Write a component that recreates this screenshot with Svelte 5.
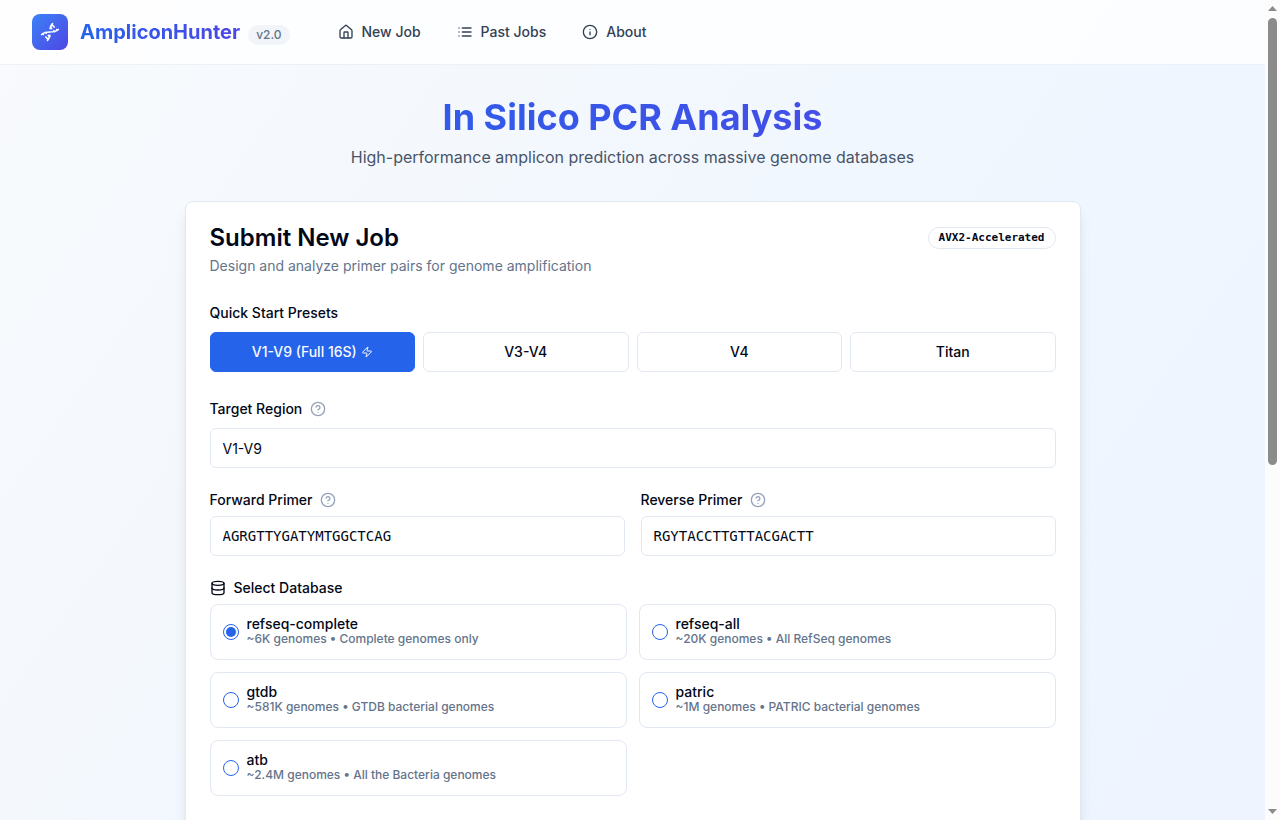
<script lang="ts">
  interface Database {
    id: string
    summary: string
  }

  const presets = [
    { id: 'V1-V9', label: 'V1-V9 (Full 16S)', fast: true, forward: 'AGRGTTYGATYMTGGCTCAG', reverse: 'RGYTACCTTGTTACGACTT' },
    { id: 'V3-V4', label: 'V3-V4', fast: false, forward: 'CCTACGGGNGGCWGCAG', reverse: 'GACTACHVGGGTATCTAATCC' },
    { id: 'V4', label: 'V4', fast: false, forward: 'GTGYCAGCMGCCGCGGTAA', reverse: 'GGACTACNVGGGTWTCTAAT' },
    { id: 'Titan', label: 'Titan', fast: false, forward: 'AGRRTTYGATYHTDGYTYAG', reverse: 'YCNTTCCYTYDYRGTACT' }
  ]

  const databases: Database[] = [
    { id: 'refseq-complete', summary: '~6K genomes • Complete genomes only' },
    { id: 'refseq-all', summary: '~20K genomes • All RefSeq genomes' },
    { id: 'gtdb', summary: '~581K genomes • GTDB bacterial genomes' },
    { id: 'patric', summary: '~1M genomes • PATRIC bacterial genomes' },
    { id: 'atb', summary: '~2.4M genomes • All the Bacteria genomes' }
  ]

  let preset = $state('V1-V9')
  let region = $state('V1-V9')
  let forward = $state('AGRGTTYGATYMTGGCTCAG')
  let reverse = $state('RGYTACCTTGTTACGACTT')
  let database = $state('refseq-complete')

  function applyPreset(p: (typeof presets)[number]) {
    preset = p.id
    region = p.id
    forward = p.forward
    reverse = p.reverse
  }
</script>

{#snippet help(label: string)}
  <button type="button" class="help" aria-label={label}>
    <svg class="icon" viewBox="0 0 24 24">
      <circle cx="12" cy="12" r="10" />
      <path d="M9.09 9a3 3 0 0 1 5.83 1c0 2-3 3-3 3" />
      <path d="M12 17h.01" />
    </svg>
  </button>
{/snippet}

<div class="shell">
  <div class="page">
    <header class="topbar">
      <a class="brand" href="#home">
        <span class="brand-mark">
          <svg class="icon icon--logo" viewBox="0 0 24 24">
            <path d="M2 15c6.667-6 13.333 0 20-6" />
            <path d="M9 22c1.798-1.998 2.518-3.995 2.807-5.993" />
            <path d="M15 2c-1.798 1.998-2.518 3.995-2.807 5.993" />
            <path d="m17 6-2.5-2.5M14 8l-1-1M7 18l2.5 2.5M3.5 14.5l.5.5M20 9l.5.5M6.5 12.5l1 1M16.500 10.500l1 1M10 16l1.500 1.500" />
          </svg>
        </span>
        <span class="brand-name">AmpliconHunter</span>
        <span class="version">v2.0</span>
      </a>
      <nav class="nav">
        <a href="#new">
          <svg class="icon" viewBox="0 0 24 24">
            <path d="M15 21v-8a1 1 0 0 0-1-1h-4a1 1 0 0 0-1 1v8" />
            <path d="M3 10a2 2 0 0 1 .709-1.528l7-5.999a2 2 0 0 1 2.582 0l7 5.999A2 2 0 0 1 21 10v9a2 2 0 0 1-2 2H5a2 2 0 0 1-2-2z" />
          </svg>
          New Job
        </a>
        <a href="#jobs">
          <svg class="icon" viewBox="0 0 24 24">
            <path d="M3 12h.01M3 18h.01M3 6h.01M8 12h13M8 18h13M8 6h13" />
          </svg>
          Past Jobs
        </a>
        <a href="#about">
          <svg class="icon" viewBox="0 0 24 24">
            <circle cx="12" cy="12" r="10" />
            <path d="M12 16v-4M12 8h.01" />
          </svg>
          About
        </a>
      </nav>
    </header>

    <main>
      <div class="hero">
        <h1>In Silico PCR Analysis</h1>
        <p>High-performance amplicon prediction across massive genome databases</p>
      </div>

      <form class="card">
        <div class="card-header">
          <div class="card-title">
            <h2>Submit New Job</h2>
            <span class="badge">AVX2-Accelerated</span>
          </div>
          <p>Design and analyze primer pairs for genome amplification</p>
        </div>

        <div class="field" role="group" aria-labelledby="presets-label">
          <span class="label label--tall" id="presets-label">Quick Start Presets</span>
          <div class="presets">
            {#each presets as p}
              <button
                type="button"
                class="preset"
                class:preset--active={p.id === preset}
                onclick={() => applyPreset(p)}
              >
                {p.label}
                {#if p.fast}
                  <svg class="icon icon--zap" viewBox="0 0 24 24">
                    <path d="M4 14a1 1 0 0 1-.78-1.63l9.900-10.200a.5.5 0 0 1 .86.46l-1.920 6.020A1 1 0 0 0 13 10h7a1 1 0 0 1 .78 1.630l-9.900 10.200a.5.5 0 0 1-.86-.46l1.920-6.020A1 1 0 0 0 11 14z" />
                  </svg>
                {/if}
              </button>
            {/each}
          </div>
        </div>

        <div class="field">
          <div class="label label--tall">
            <label for="region">Target Region</label>
            {@render help('About target region')}
          </div>
          <input id="region" class="input" type="text" bind:value={region} />
        </div>

        <div class="primers">
          <div class="field">
            <div class="label">
              <label for="forward">Forward Primer</label>
              {@render help('About forward primer')}
            </div>
            <input id="forward" class="input input--mono" type="text" spellcheck="false" bind:value={forward} />
          </div>
          <div class="field">
            <div class="label">
              <label for="reverse">Reverse Primer</label>
              {@render help('About reverse primer')}
            </div>
            <input id="reverse" class="input input--mono" type="text" spellcheck="false" bind:value={reverse} />
          </div>
        </div>

        <div class="field" role="radiogroup" aria-labelledby="database-label">
          <span class="label" id="database-label">
            <svg class="icon" viewBox="0 0 24 24">
              <ellipse cx="12" cy="5" rx="9" ry="3" />
              <path d="M3 5v14a9 3 0 0 0 18 0V5" />
              <path d="M3 12a9 3 0 0 0 18 0" />
            </svg>
            Select Database
          </span>
          <div class="databases">
            {#each databases as db}
              <label class="database">
                <input type="radio" name="database" value={db.id} bind:group={database} />
                <span class="database-text">
                  <span class="database-name">{db.id}</span>
                  <span class="database-summary">{db.summary}</span>
                </span>
              </label>
            {/each}
          </div>
        </div>
      </form>
    </main>
  </div>

  <div class="scrollbar" aria-hidden="true">
    <svg class="arrow" viewBox="0 0 9 5"><path d="M4.500 0 9 5H0z" /></svg>
    <div class="track"><div class="thumb"></div></div>
    <svg class="arrow" viewBox="0 0 9 5"><path d="M0 0h9L4.500 5z" /></svg>
  </div>
</div>

<style>
  .shell {
    --blue: #2563eb;
    --indigo: #4f46e5;
    --ink: #020817;
    --muted: #64748b;
    --border: #e2e8f0;
    --mono: 'DejaVu Sans Mono', monospace;

    display: flex;
    height: 100vh;
    overflow: hidden;
    color: var(--ink);
    font-family: Inter, sans-serif;
    font-size: 14px;
    line-height: 20px;
  }

  .shell *,
  .shell *::before {
    box-sizing: border-box;
  }

  h1,
  h2,
  p {
    margin: 0;
  }

  a {
    color: inherit;
    text-decoration: none;
  }

  .page {
    flex: 1;
    min-width: 0;
    background: linear-gradient(to bottom right, #f8fafc, #eff6ff, #eef2ff) 0 0 / 100% 220vh no-repeat;
  }

  .icon {
    width: 16px;
    height: 16px;
    flex: none;
    fill: none;
    stroke: currentColor;
    stroke-width: 2;
    stroke-linecap: round;
    stroke-linejoin: round;
  }

  /* Top bar */
  .topbar {
    display: flex;
    align-items: center;
    gap: 48px;
    height: 65px;
    padding: 0 32px;
    background: rgba(255, 255, 255, 0.8);
    border-bottom: 1px solid rgba(226, 232, 240, 0.6);
  }

  .brand {
    display: flex;
    align-items: center;
  }

  .brand-mark {
    display: flex;
    align-items: center;
    justify-content: center;
    width: 36px;
    height: 36px;
    margin-right: 12px;
    color: #fff;
    background: linear-gradient(to bottom right, #3b82f6, var(--indigo));
    border-radius: 8px;
  }

  .icon--logo {
    width: 20px;
    height: 20px;
  }

  .brand-name {
    font-size: 20px;
    font-weight: 700;
    line-height: 28px;
    color: transparent;
    background: linear-gradient(to right, var(--blue), var(--indigo));
    background-clip: text;
  }

  .version {
    margin: 6px 0 0 8px;
    padding: 2px 8px;
    color: var(--muted);
    font-size: 12px;
    font-weight: 500;
    line-height: 16px;
    background: #f1f5f9;
    border-radius: 10px;
  }

  .nav {
    display: flex;
    gap: 36px;
    color: #334155;
    font-weight: 500;
  }

  .nav a {
    display: flex;
    align-items: center;
    gap: 8px;
  }

  /* Hero */
  main {
    max-width: 896px;
    margin: 0 auto;
    padding-top: 32px;
  }

  .hero {
    margin-bottom: 32px;
    text-align: center;
  }

  .hero h1 {
    font-size: 36px;
    font-weight: 700;
    line-height: 40px;
    color: transparent;
    background: linear-gradient(to right, var(--blue), var(--indigo));
    background-clip: text;
  }

  .hero p {
    margin-top: 8px;
    color: #475569;
    font-size: 16px;
    line-height: 24px;
  }

  /* Form card */
  .card {
    display: flex;
    flex-direction: column;
    gap: 24px;
    padding: 24px 24px 48px;
    background: #fff;
    border: 1px solid var(--border);
    border-radius: 8px;
    box-shadow:
      0 10px 15px -3px rgba(0, 0, 0, 0.1),
      0 4px 6px -4px rgba(0, 0, 0, 0.1);
  }

  .card-header p {
    margin-top: 6px;
    color: var(--muted);
  }

  .card-title {
    display: flex;
    align-items: center;
    justify-content: space-between;
  }

  .card-title h2 {
    font-size: 24px;
    font-weight: 600;
    line-height: 24px;
  }

  .badge {
    padding: 0 10px;
    font-family: var(--mono);
    font-size: 11px;
    font-weight: 700;
    line-height: 20px;
    border: 1px solid var(--border);
    border-radius: 11px;
  }

  .field {
    display: flex;
    flex-direction: column;
    gap: 8px;
    min-width: 0;
  }

  .label {
    display: flex;
    align-items: center;
    gap: 8px;
    height: 16px;
    font-weight: 500;
  }

  .label--tall {
    height: 24px;
    padding-top: 2px;
  }

  .help {
    display: flex;
    padding: 0;
    color: #94a3b8;
    background: none;
    border: 0;
  }

  .presets {
    display: grid;
    grid-template-columns: repeat(4, 1fr);
    gap: 8px;
  }

  .preset {
    display: flex;
    align-items: center;
    justify-content: center;
    gap: 4px;
    height: 40px;
    color: var(--ink);
    font: inherit;
    font-weight: 500;
    background: #fff;
    border: 1px solid var(--border);
    border-radius: 6px;
    cursor: pointer;
  }

  .preset--active {
    color: #f8fafc;
    background: var(--blue);
    border-color: var(--blue);
  }

  .icon--zap {
    width: 12px;
    height: 12px;
  }

  .input {
    width: 100%;
    height: 40px;
    padding: 0 12px;
    color: var(--ink);
    font: inherit;
    background: #fff;
    border: 1px solid var(--border);
    border-radius: 6px;
  }

  .input--mono {
    font-family: var(--mono);
  }

  .primers {
    display: grid;
    grid-template-columns: repeat(2, 1fr);
    gap: 16px;
  }

  /* Databases */
  .databases {
    display: grid;
    grid-template-columns: repeat(2, 1fr);
    gap: 12px;
  }

  .database {
    display: flex;
    align-items: center;
    gap: 8px;
    padding: 12px;
    font-weight: 500;
    border: 1px solid var(--border);
    border-radius: 8px;
    cursor: pointer;
  }

  .database input {
    display: grid;
    place-items: center;
    width: 16px;
    height: 16px;
    margin: 0;
    appearance: none;
    border: 1px solid var(--blue);
    border-radius: 50%;
  }

  .database input:checked::before {
    content: '';
    width: 10px;
    height: 10px;
    background: var(--blue);
    border-radius: 50%;
  }

  .database-text {
    display: flex;
    flex-direction: column;
  }

  .database-name {
    line-height: 14px;
  }

  .database-summary {
    color: var(--muted);
    font-size: 12px;
    line-height: 16px;
  }

  /* Page scrollbar */
  .scrollbar {
    display: flex;
    flex-direction: column;
    align-items: center;
    gap: 7px;
    width: 15px;
    padding: 6px 0;
    background: #fcfcfc;
  }

  .arrow {
    width: 9px;
    height: 5px;
    fill: #8b8b8b;
  }

  .track {
    flex: 1;
    width: 9px;
  }

  .thumb {
    height: 57%;
    background: #8b8b8b;
    border-radius: 5px;
  }
</style>
